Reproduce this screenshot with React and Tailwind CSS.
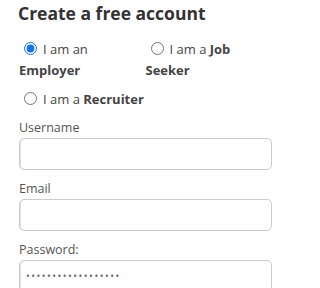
import { useState } from 'react';

export default function App() {
  const [role, setRole] = useState('employer');

  return (
    <div className="min-h-screen w-[288px] bg-white pl-[19px] pr-[16px] font-['Open_Sans',sans-serif] text-[#444]">
      <h2 className="text-[17.5px] font-bold leading-[26px] text-[#333] -ml-px">Create a free account</h2>

      {/* Role choice */}
      <div className="mt-[13px] grid grid-cols-2 gap-y-[8px] text-[13px] leading-[21px]">
        <label className="cursor-pointer">
          <input
            type="radio"
            name="role"
            checked={role === 'employer'}
            onChange={() => setRole('employer')}
            className="ml-[5px] mr-[6px] align-[-1px] accent-[#1a73e8]"
          />
          <span>I am an </span>
          <b className="font-bold">Employer</b>
        </label>
        <label className="cursor-pointer">
          <input
            type="radio"
            name="role"
            checked={role === 'seeker'}
            onChange={() => setRole('seeker')}
            className="ml-[5px] mr-[6px] align-[-1px] accent-[#1a73e8]"
          />
          <span>I am a </span>
          <b className="font-bold">Job</b> <b className="font-bold">Seeker</b>
        </label>
        <label className="col-span-2 cursor-pointer">
          <input
            type="radio"
            name="role"
            checked={role === 'recruiter'}
            onChange={() => setRole('recruiter')}
            className="ml-[5px] mr-[6px] align-[-1px] accent-[#1a73e8]"
          />
          <span>I am a </span>
          <b className="font-bold">Recruiter</b>
        </label>
      </div>

      {/* Fields */}
      <form className="mt-[8px]">
        <label className="block text-[12.5px] leading-[20px] text-[#555]">Username</label>
        <input type="text" className="mb-[9px] block h-[32px] w-full rounded-[5px] border border-[#ccc] px-2 shadow-[inset_1px_0_0_rgba(0,0,0,0.12)] outline-none" />

        <label className="block text-[12.5px] leading-[20px] text-[#555]">Email</label>
        <input type="email" className="mb-[9px] block h-[32px] w-full rounded-[5px] border border-[#ccc] px-2 shadow-[inset_1px_0_0_rgba(0,0,0,0.12)] outline-none" />

        <label className="block text-[12.5px] leading-[20px] text-[#555]">Password:</label>
        <input
          type="password"
          defaultValue="passwordpassword12"
          className="block h-[32px] w-full rounded-[5px] border border-[#ccc] px-[6px] text-[10px] tracking-[1.5px] text-[#666] shadow-[inset_1px_0_0_rgba(0,0,0,0.12)] outline-none"
        />
      </form>
    </div>
  );
}
